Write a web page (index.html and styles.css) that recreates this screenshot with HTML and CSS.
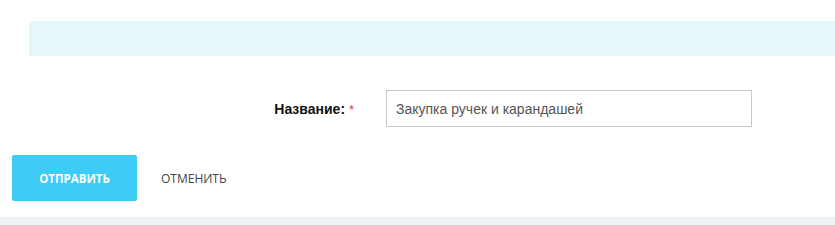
FILE: index.html
```html
<!DOCTYPE html>
<html lang="ru">
<head>
    <meta charset="UTF-8">
    <title>Новая заявка</title>
    <link rel="stylesheet" href="styles.css">
</head>
<body>
    <div class="notice-bar"></div>

    <form class="task-form">
        <div class="form-row">
            <label class="form-label" for="taskName">Название: <span class="required">*</span></label>
            <input class="form-input" id="taskName" type="text" value="Закупка ручек и карандашей">
        </div>

        <div class="form-actions">
            <button class="btn btn-submit" type="submit">Отправить</button>
            <button class="btn btn-cancel" type="button">Отменить</button>
        </div>
    </form>

    <div class="footer-strip"></div>
</body>
</html>
```

FILE: styles.css
```css
* {
    margin: 0;
    padding: 0;
    box-sizing: border-box;
}

body {
    font-family: 'Liberation Sans', Arial, sans-serif;
    background: #fff;
    width: 835px;
    height: 225px;
    overflow: hidden;
    padding-top: 21px;
}

.notice-bar {
    margin-left: 29px;
    height: 35px;
    background: #e6f7fc;
}

.task-form {
    padding-top: 34px;
}

/* Field row */
.form-row {
    display: flex;
    align-items: center;
    height: 37px;
}

.form-label {
    width: 386px;
    padding-right: 32px;
    text-align: right;
    font-size: 14px;
    font-weight: bold;
    color: #111;
}

.required {
    color: #e33;
    font-weight: normal;
    font-size: 13px;
}

.form-input {
    width: 366px;
    height: 37px;
    border: 1px solid #c8c8c8;
    padding: 0 9px;
    font-family: 'Liberation Sans', Arial, sans-serif;
    font-size: 14px;
    color: #555;
    outline: none;
}

/* Buttons */
.form-actions {
    display: flex;
    align-items: center;
    margin-top: 28px;
    padding-left: 12px;
}

.btn {
    font-family: 'Open Sans', sans-serif;
    font-size: 12px;
    text-transform: uppercase;
    border: none;
    cursor: pointer;
    background: none;
}

.btn-submit {
    width: 125px;
    height: 46px;
    background: #3ecbf6;
    color: #fff;
    font-size: 11.5px;
    font-weight: 700;
    border-radius: 2px;
}

.btn-cancel {
    height: 46px;
    padding: 0 24px;
    color: #444;
    font-weight: 400;
}

.footer-strip {
    margin-top: 16px;
    height: 10px;
    background: #eef1f5;
}
```
